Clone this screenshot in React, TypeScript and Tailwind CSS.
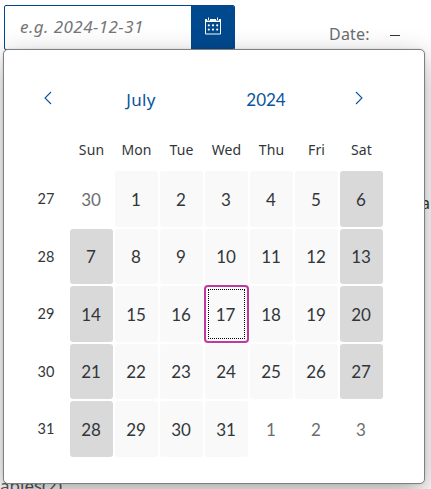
const weekDays = ["Sun", "Mon", "Tue", "Wed", "Thu", "Fri", "Sat"];

const weeks = [
  { number: 27, days: [30, 1, 2, 3, 4, 5, 6] },
  { number: 28, days: [7, 8, 9, 10, 11, 12, 13] },
  { number: 29, days: [14, 15, 16, 17, 18, 19, 20] },
  { number: 30, days: [21, 22, 23, 24, 25, 26, 27] },
  { number: 31, days: [28, 29, 30, 31, 1, 2, 3] },
];

function Arrow({ points }: { points: string }) {
  return (
    <svg width="8" height="14" viewBox="0 0 8 14" fill="none" stroke="#0854a0" strokeWidth="1.1">
      <polyline points={points} />
    </svg>
  );
}

function CalendarIcon() {
  return (
    <svg width="16" height="18" viewBox="0 0 16 18" fill="none">
      <path d="M.5 2.5h15v14.5H.5z" stroke="white" />
      <path d="M0 2h16v3H0z" fill="white" />
      <path d="M3.5 0v3.5M12.5 0v3.5" stroke="#00498f" strokeWidth="3" />
      <path d="M3.5 .5v2.5M12.5 .5v2.5" stroke="white" />
      <g fill="white">
        <circle cx="3.8" cy="8.3" r="1.1" />
        <circle cx="8" cy="8.3" r="1.1" />
        <circle cx="12.2" cy="8.3" r="1.1" />
        <circle cx="3.8" cy="12.6" r="1.1" />
        <circle cx="8" cy="12.6" r="1.1" />
        <circle cx="12.2" cy="12.6" r="1.1" />
      </g>
    </svg>
  );
}

function Day({ day, week, column }: { day: number; week: number; column: number }) {
  const outside = (week === 0 && day > 7) || (week === 4 && day < 7);
  const weekend = column === 0 || column === 6;
  const today = week === 2 && day === 17;
  const tone = outside
    ? "text-[#6a6d70]"
    : weekend
      ? "bg-[#d9d9d9] text-[#32363a]"
      : "bg-[#f9f9f9] text-[#32363a]";
  if (today) {
    return (
      <button className="-m-px flex rounded-[4px] border-2 border-[#c0399f] bg-[#fafafa] p-[2px] text-[#32363a]">
        <span className="flex flex-1 items-center justify-center self-stretch border border-dotted border-black pr-[2px] pt-[2px]">
          {day}
        </span>
      </button>
    );
  }
  return <button className={"flex items-center justify-center rounded-[3px] pr-px pt-px " + tone}>{day}</button>;
}

export default function App() {
  return (
    <div className="relative h-[489px] w-[431px] overflow-hidden bg-white font-['Noto_Sans',sans-serif] text-[#32363a]">
      <div className="flex pl-1 pt-[5px]">
        <div className="flex h-[45px] w-[231px] overflow-hidden rounded-[2px] border border-[#00498f]">
          <div className="flex flex-1 items-center whitespace-nowrap pb-[2px] pl-[15px] text-[17px] italic tracking-[0.45px] text-[#74777a]">
            e.g. 2024-12-31
          </div>
          <button className="flex w-[43px] items-center justify-center bg-[#00498f] pb-[3px]">
            <CalendarIcon />
          </button>
        </div>
        <div className="flex h-[45px] items-center gap-5 pl-[94px] pt-3 text-[16px]">
          <span className="tracking-[0.2px] text-[#6a6d70]">Date:</span>
          <span className="mt-[3px] h-px w-[10px] bg-[#32363a]" />
        </div>
      </div>
      <span className="absolute left-[421px] top-[193px] text-[16px] leading-5">ar</span>
      <span className="absolute left-0 top-[476px] text-[17px] leading-5 text-[#55585b]">ables(2)</span>

      <div className="absolute left-[3px] top-[49px] flex h-[435px] w-[422px] flex-col rounded-[5px] border border-[#808080] bg-white px-[21px] shadow-[0_0_2px_rgba(0,0,0,0.16),0_10px_30px_rgba(0,0,0,0.33)]">
        <div className="mt-[34px] flex h-8 items-center text-[#0854a0]">
          <button className="flex w-[46px] justify-center pb-[4px]"><Arrow points="7,1 1,7 7,13" /></button>
          <button className="w-[140px] text-center text-[17px] leading-6 tracking-[0.3px]">July</button>
          <button className="w-[110px] text-center font-['Lato',sans-serif] text-[17px] leading-6">2024</button>
          <button className="flex w-[76px] justify-center pb-[4px]"><Arrow points="1,1 7,7 1,13" /></button>
        </div>

        <div className="mt-[22px] flex h-[33px] pl-[45px] text-[14px]">
          {weekDays.map((name) => (
            <span key={name} className="flex w-[45px] items-start justify-center pr-[2px] pt-[1px] tracking-[0.1px]">{name}</span>
          ))}
        </div>

        <div className="flex h-[286px] flex-col gap-[2px] font-['Lato',sans-serif]">
          {weeks.map((week, row) => (
            <div key={week.number} className="grid flex-1 grid-cols-[43px_repeat(7,43px)] gap-[2px] text-[17px]">
              <span className="flex items-center justify-center pr-px text-[14.5px]">{week.number}</span>
              {week.days.map((day, column) => (
                <Day key={day} day={day} week={row} column={column} />
              ))}
            </div>
          ))}
        </div>
      </div>
    </div>
  );
}
